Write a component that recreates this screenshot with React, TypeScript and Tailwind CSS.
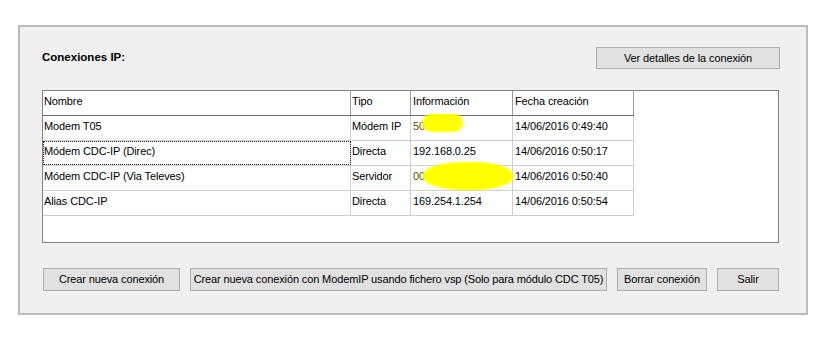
import React from "react";

const rows = [
  { n: "Modem T05", t: "Módem IP", i: "50", f: "14/06/2016 0:49:40", hl: "a" },
  { n: "Módem CDC-IP (Direc)", t: "Directa", i: "192.168.0.25", f: "14/06/2016 0:50:17", focus: true },
  { n: "Módem CDC-IP (Via Televes)", t: "Servidor", i: "00", f: "14/06/2016 0:50:40", hl: "b" },
  { n: "Alias CDC-IP", t: "Directa", i: "169.254.1.254", f: "14/06/2016 0:50:54" },
];

function Btn({ w, children }: { w: string; children: React.ReactNode }) {
  return (
    <button
      className={`${w} h-[23px] border border-[#adadad] bg-[#e1e1e1] text-black flex items-center justify-center whitespace-nowrap`}
    >
      {children}
    </button>
  );
}

export default function App() {
  return (
    <div
      className="w-[830px] h-[338px] bg-white pt-[25px] pl-[18px] text-[11px] tracking-[-0.12px] text-black"
      style={{ fontFamily: "'Liberation Sans', Arial, sans-serif" }}
    >
      <div className="w-[790px] h-[290px] border-2 border-[#bcbcbc] bg-[#f0f0f0] pl-[22px] pr-[27px] pt-[20px]">
        <div className="flex items-center justify-between h-[22px]">
          <span className="font-bold text-[11.5px] tracking-normal pb-[1px]">Conexiones IP:</span>
          <button className="w-[184px] h-[22px] border border-[#adadad] bg-[#e1e1e1] flex items-center justify-center mr-[-1px] whitespace-nowrap">
            Ver detalles de la conexión
          </button>
        </div>
        <div className="mt-[21px] w-[737px] h-[153px] border border-[#828282] bg-white">
          <div className="flex h-[25px] border-b border-[#6e6e6e] w-[591px]">
            <div className="w-[308px] border-r border-[#9a9a9a] pl-[1px] flex items-center pb-[3px]">Nombre</div>
            <div className="w-[60px] border-r border-[#9a9a9a] pl-[1px] flex items-center pb-[3px]">Tipo</div>
            <div className="w-[102px] border-r border-[#9a9a9a] pl-[2px] flex items-center pb-[3px]">Información</div>
            <div className="w-[121px] border-r border-[#9a9a9a] pl-[2px] flex items-center pb-[3px]">Fecha creación</div>
          </div>
          {rows.map((r, k) => (
            <div key={k} className="flex h-[25px] border-b border-[#cfcfcf] w-[591px]">
              <div
                className={`w-[308px] border-r border-[#cfcfcf] pl-[1px] flex items-center pb-[3px] ${
                  r.focus ? "outline outline-1 outline-dotted outline-[#222] -outline-offset-1" : ""
                }`}
              >
                {r.n}
              </div>
              <div className="w-[60px] border-r border-[#cfcfcf] pl-[1px] flex items-center pb-[3px] whitespace-nowrap">{r.t}</div>
              <div className="relative w-[102px] border-r border-[#cfcfcf] pl-[2px] flex items-center pb-[3px]">
                <span className={r.hl ? "text-[#5e5600]" : ""}>{r.i}</span>
                {r.hl === "a" && (
                  <div className="absolute left-[11px] -top-[2px] w-[41px] h-[18px] rounded-full bg-[#ffff00] blur-[1px]" />
                )}
                {r.hl === "b" && (
                  <div className="absolute left-[12px] -top-[4px] w-[90px] h-[28px] rounded-[45%] bg-[#ffff00] blur-[1px]" />
                )}
              </div>
              <div className="w-[121px] border-r border-[#cfcfcf] pl-[2px] flex items-center pb-[3px] whitespace-nowrap">{r.f}</div>
            </div>
          ))}
        </div>
        <div className="mt-[25px] ml-[1px] flex gap-[10px]">
          <Btn w="w-[137px]">Crear nueva conexión</Btn>
          <Btn w="w-[417px]">Crear nueva conexión con ModemIP usando fichero vsp (Solo para módulo CDC T05)</Btn>
          <Btn w="w-[90px]">Borrar conexión</Btn>
          <Btn w="w-[62px]">Salir</Btn>
        </div>
      </div>
    </div>
  );
}
